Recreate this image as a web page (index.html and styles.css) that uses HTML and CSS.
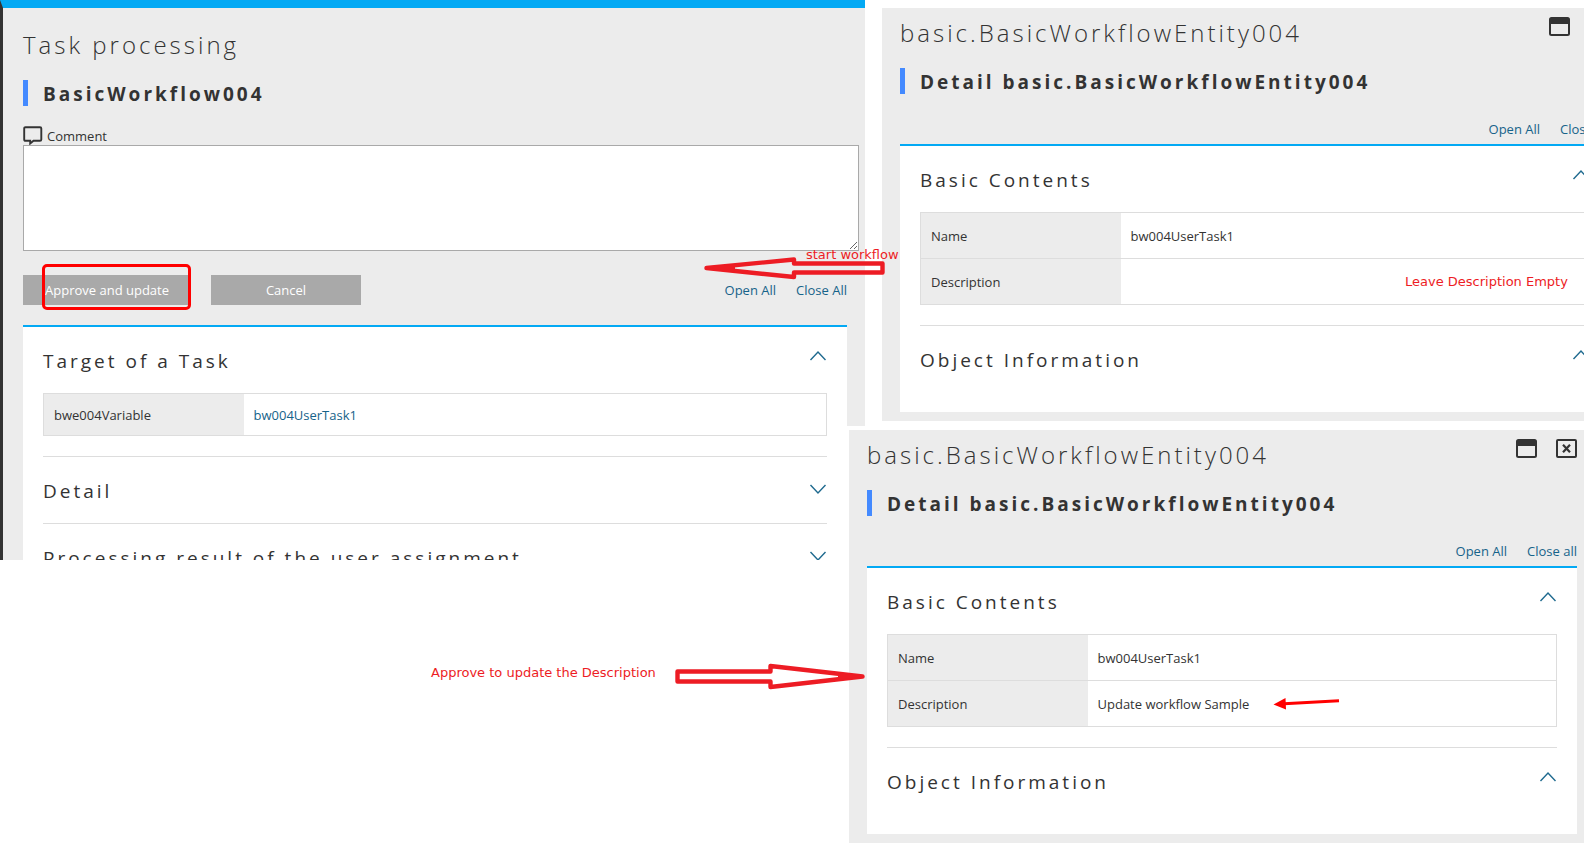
FILE: index.html
```html
<!DOCTYPE html>
<html lang="en">
<head>
<meta charset="utf-8">
<title>Task processing</title>
<link rel="stylesheet" href="styles.css">
</head>
<body>
<svg width="0" height="0" class="defs" aria-hidden="true">
  <symbol id="up" viewBox="0 0 18 12"><path d="M1.500 10 9 2l7.500 8" fill="none" stroke="#1f6a8f" stroke-width="1.400"/></symbol>
  <symbol id="down" viewBox="0 0 18 12"><path d="M1.500 2 9 10l7.500-8" fill="none" stroke="#1f6a8f" stroke-width="1.400"/></symbol>
  <symbol id="window" viewBox="0 0 21 19"><rect x="1" y="1" width="19" height="17" rx="1.500" fill="none" stroke="#333" stroke-width="2"/><path d="M1 1h19v6H1z" fill="#333"/></symbol>
  <symbol id="close" viewBox="0 0 21 19"><rect x="1" y="1" width="19" height="17" rx="1" fill="none" stroke="#333" stroke-width="2"/><path d="M7 5.800l7 7.400M14 5.800l-7 7.400" stroke="#333" stroke-width="2.200"/></symbol>
</svg>
<main class="board">
  <section class="window task">
    <h1 class="title">Task processing</h1>
    <h2 class="subtitle">BasicWorkflow004</h2>
    <label class="comment-label" for="comment">
      <svg width="20" height="19" viewBox="0 0 20 19"><path d="M2.500 1.200h14.500q1.300 0 1.300 1.300v11q0 1.300-1.300 1.300h-6.500L7.200 17.500v-2.700H2.500q-1.300 0-1.300-1.300v-11q0-1.300 1.300-1.300z" fill="none" stroke="#333" stroke-width="1.900"/></svg>
      Comment
    </label>
    <textarea class="comment" id="comment"></textarea>
    <div class="actions">
      <button class="action wide" type="button">Approve and update</button>
      <button class="action" type="button">Cancel</button>
      <nav class="links"><a href="#">Open All</a><a href="#">Close All</a></nav>
    </div>
    <div class="card">
      <section class="group open">
        <h3 class="group-head">Target of a Task<button class="toggle" type="button" aria-label="Collapse"><svg><use href="#up"/></svg></button></h3>
        <table class="fields short">
          <tr><th scope="row">bwe004Variable</th><td><a href="#">bw004UserTask1</a></td></tr>
        </table>
      </section>
      <section class="group">
        <h3 class="group-head">Detail<button class="toggle" type="button" aria-label="Expand"><svg><use href="#down"/></svg></button></h3>
      </section>
      <section class="group">
        <h3 class="group-head">Processing result of the user assignment<button class="toggle" type="button" aria-label="Expand"><svg><use href="#down"/></svg></button></h3>
      </section>
    </div>
  </section>

  <div class="slot-top">
    <section class="window entity">
      <header class="bar">
        <h1 class="title">basic.BasicWorkflowEntity004</h1>
        <div class="tools">
          <button class="tool" type="button" aria-label="Maximize"><svg><use href="#window"/></svg></button>
          <button class="tool" type="button" aria-label="Close"><svg><use href="#close"/></svg></button>
        </div>
      </header>
      <h2 class="subtitle">Detail basic.BasicWorkflowEntity004</h2>
      <nav class="links"><a href="#">Open All</a><a href="#">Close all</a></nav>
      <div class="card">
        <section class="group open">
          <h3 class="group-head">Basic Contents<button class="toggle" type="button" aria-label="Collapse"><svg><use href="#up"/></svg></button></h3>
          <table class="fields">
            <tr><th scope="row">Name</th><td>bw004UserTask1</td></tr>
            <tr><th scope="row">Description</th><td></td></tr>
          </table>
        </section>
        <section class="group open">
          <h3 class="group-head">Object Information<button class="toggle" type="button" aria-label="Collapse"><svg><use href="#up"/></svg></button></h3>
        </section>
      </div>
    </section>
  </div>

  <div class="slot-bottom">
    <section class="window entity">
      <header class="bar">
        <h1 class="title">basic.BasicWorkflowEntity004</h1>
        <div class="tools">
          <button class="tool" type="button" aria-label="Maximize"><svg><use href="#window"/></svg></button>
          <button class="tool" type="button" aria-label="Close"><svg><use href="#close"/></svg></button>
        </div>
      </header>
      <h2 class="subtitle">Detail basic.BasicWorkflowEntity004</h2>
      <nav class="links"><a href="#">Open All</a><a href="#">Close all</a></nav>
      <div class="card">
        <section class="group open">
          <h3 class="group-head">Basic Contents<button class="toggle" type="button" aria-label="Collapse"><svg><use href="#up"/></svg></button></h3>
          <table class="fields">
            <tr><th scope="row">Name</th><td>bw004UserTask1</td></tr>
            <tr><th scope="row">Description</th><td>Update workflow Sample</td></tr>
          </table>
        </section>
        <section class="group open">
          <h3 class="group-head">Object Information<button class="toggle" type="button" aria-label="Collapse"><svg><use href="#up"/></svg></button></h3>
        </section>
      </div>
    </section>
  </div>

  <svg class="marks" width="1584" height="844" viewBox="0 0 1584 844" aria-hidden="true">
    <rect x="43.500" y="265.500" width="146" height="43" rx="3.500" fill="none" stroke="#f00" stroke-width="3"/>
    <g fill="none" stroke="#ed1c24" stroke-width="4.400" stroke-linejoin="round">
      <path d="M706.500 268 794 259.500v4h88.500v9H794v4.500z"/>
      <path d="M862.500 676.500 770.500 666v5.500h-93v10h93v5.500z"/>
    </g>
    <path d="M706 268 735 264v8zM863 676.500 838 673v7z" fill="#ed1c24"/>
    <path d="M1339 700.700 1284 703.800" stroke="#f00" stroke-width="3"/>
    <path d="M1273.500 704.500 1285.500 698l.5 11.500z" fill="#f00"/>
  </svg>
  <p class="note note-start">start workflow</p>
  <p class="note note-empty">Leave Description Empty</p>
  <p class="note note-approve">Approve to update the Description</p>
</main>
</body>
</html>
```
FILE: styles.css
```css
* { box-sizing: border-box; }
body { margin: 0; background: #fff; color: #333; font: 13px/20px "Open Sans", "Noto Sans", sans-serif; overflow-x: hidden; }
h1, h2, h3, p { margin: 0; }
a { color: #16638a; text-decoration: none; }
button { font: inherit; border: 0; padding: 0; cursor: pointer; }
.defs { position: absolute; }

.board {
  position: relative;
  display: grid;
  grid-template-columns: minmax(0, 847fr) minmax(0, 18fr) minmax(0, 17fr) minmax(0, 702fr);
  overflow: hidden;
}
.window { background: #ececec; }

.task {
  grid-area: 1 / 1 / 3 / 3;
  align-self: start;
  max-height: 560px;
  overflow: hidden;
  padding: 12px 18px 0 20px;
  border-left: 3px solid #333;
  border-top: 8px solid #03a9f4;
}
.slot-top { grid-area: 1 / 4; padding: 8px 0 5px; }
.slot-top .entity { margin-right: -33px; }
.slot-bottom {
  grid-area: 2 / 2 / 3 / 5;
  border-top: 4px solid #fff;
  border-left: 2px solid #fff;
  background: #fff;
}
.entity { padding: 0 7px 9px 18px; }

.bar { display: flex; justify-content: space-between; align-items: flex-start; }
.title { height: 60px; padding-top: 8px; font-size: 24px; line-height: 34px; font-weight: 350; letter-spacing: 3px; white-space: nowrap; }
.tools { display: flex; gap: 19px; padding-top: 9px; }
.tool { width: 21px; height: 19px; background: none; }
.tool svg { display: block; width: 21px; height: 19px; }
.subtitle { height: 26px; border-left: 5px solid #448aff; padding-left: 15px; font-size: 19px; line-height: 28px; font-weight: 700; letter-spacing: 3px; white-space: nowrap; }

.comment-label { display: flex; align-items: center; gap: 4px; width: max-content; margin-top: 20px; height: 19px; }
.comment { display: block; width: calc(100% + 12px); height: 106px; border: 1px solid #a9a9a9; background: #fff; resize: vertical; }
.actions { display: flex; gap: 20px; align-items: center; margin: 24px 0 20px; }
.action { width: 150px; height: 30px; background: #a9a9a9; color: #fff; }
.wide { width: 168px; }
.links { display: flex; justify-content: flex-end; gap: 20px; margin-left: auto; }
.entity .links { height: 50px; padding-top: 25px; }

.card { background: #fff; border-top: 2px solid #03a9f4; padding: 0 20px; }
.group + .group { border-top: 1px solid #ddd; }
.open { padding-bottom: 20px; }
.group-head { display: flex; justify-content: space-between; align-items: center; height: 66px; padding-top: 2px; font-size: 19px; line-height: 26px; font-weight: 400; letter-spacing: 3px; white-space: nowrap; }
.toggle { background: none; width: 18px; height: 12px; margin-bottom: 4px; }
.open .toggle { margin-bottom: 10px; }
.toggle svg { display: block; width: 18px; height: 12px; }

.fields { width: 100%; border-collapse: collapse; border: 1px solid #ddd; table-layout: fixed; }
.fields th, .fields td { height: 46px; padding: 0 10px; text-align: left; font-weight: 400; border-bottom: 1px solid #ddd; }
.fields th { width: 200px; background: #ececec; }
.short th, .short td { height: 42px; }

.marks { position: absolute; left: 0; top: 0; pointer-events: none; }
.note { position: absolute; color: #ed1c24; font-size: 13px; line-height: 20px; font-family: "DejaVu Sans", sans-serif; white-space: nowrap; }
.note-start { left: 806px; top: 245px; }
.note-empty { left: 1405px; top: 272px; }
.note-approve { left: 431px; top: 663px; }
```
